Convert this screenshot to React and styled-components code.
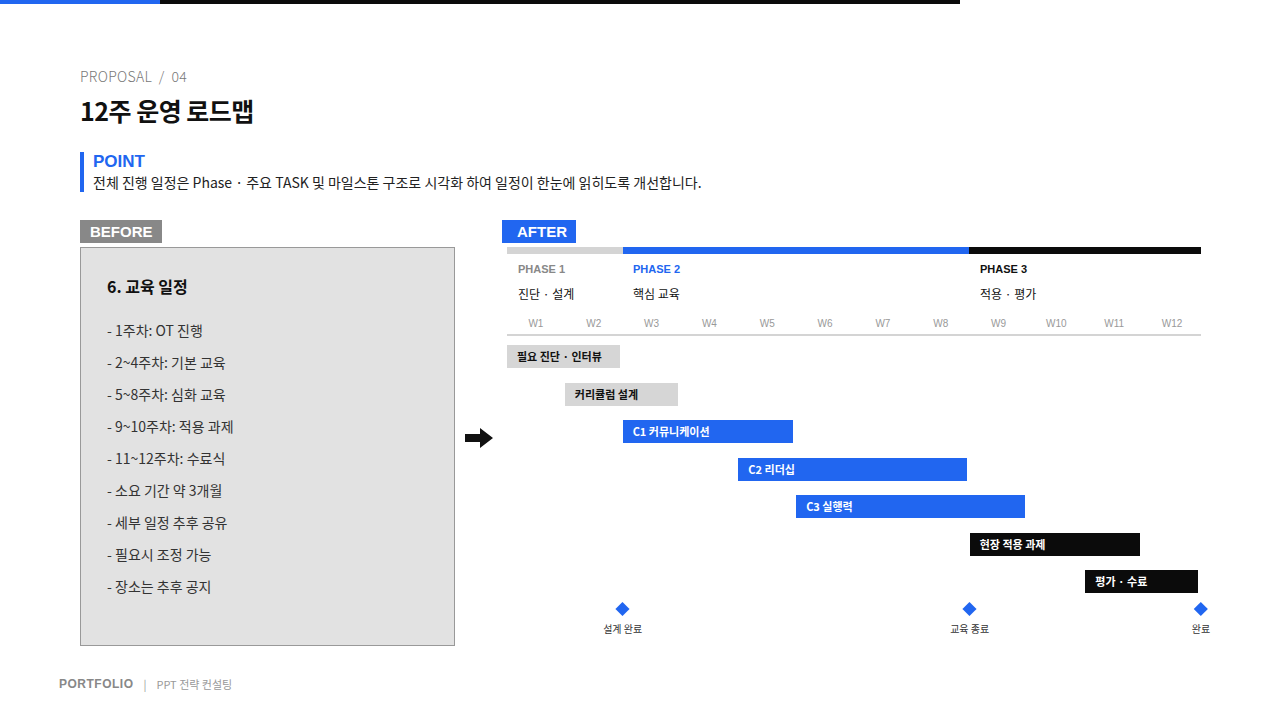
import React from "react";
import styled, { createGlobalStyle } from "styled-components";

const G = createGlobalStyle`
  body{margin:0;background:#fff;font-family:"Noto Sans CJK KR","Noto Sans",sans-serif;color:#111;}
`;
const Page = styled.div`width:1280px;height:720px;position:relative;overflow:hidden;background:#fff;`;
const TopBar = styled.div`display:flex;height:4px;width:960px;`;
const Seg = styled.div`height:100%;width:${p=>p.w}px;background:${p=>p.c};`;
const Content = styled.div`padding:62px 0 0 80px;`;
const Crumb = styled.div`font-size:14px;color:#777;font-weight:300;letter-spacing:0.3px;line-height:20px;`;
const Title = styled.h1`margin:6px 0 0;font-size:25px;font-weight:700;line-height:36px;letter-spacing:-0.5px;`;
const Point = styled.div`margin-top:24px;border-left:4px solid #2166f0;padding-left:9px;`;
const PointT = styled.div`color:#2166f0;font-weight:700;font-size:17px;line-height:20px;font-family:"Liberation Sans","Noto Sans CJK KR",sans-serif;`;
const PointD = styled.div`font-size:14px;line-height:20px;color:#222;`;
const Cols = styled.div`display:flex;margin-top:28px;`;
const Left = styled.div`width:375px;display:flex;flex-direction:column;`;
const Tag = styled.div`align-self:flex-start;background:${p=>p.c};color:#fff;font-weight:700;font-size:15px;line-height:23px;padding:0 9px 0 ${p=>p.pl||10}px;font-family:"Liberation Sans","Noto Sans CJK KR",sans-serif;`;
const Box = styled.div`margin-top:4px;height:399px;box-sizing:border-box;background:#e2e2e2;border:1px solid #999;padding:26px 26px;`;
const BoxT = styled.div`font-size:16px;font-weight:700;margin-bottom:16px;`;
const Item = styled.div`font-size:14px;color:#333;line-height:32px;`;
const Arrow = styled.div`width:47px;display:flex;align-items:center;justify-content:center;padding-top:10px;`;
const Right = styled.div`width:700px;display:flex;flex-direction:column;`;
const PhaseBar = styled.div`display:flex;margin-top:4px;margin-left:5px;height:7px;width:694px;`;
const Phases = styled.div`display:flex;margin-left:5px;width:694px;`;
const Phase = styled.div`width:${p=>p.w}px;padding:8px 0 0 ${p=>p.pl||11}px;box-sizing:border-box;`;
const PhName = styled.div`font-size:11px;font-weight:700;color:${p=>p.c};line-height:14px;font-family:"Liberation Sans",sans-serif;`;
const PhSub = styled.div`font-size:12px;margin-top:10px;line-height:16px;`;
const Weeks = styled.div`display:grid;grid-template-columns:repeat(12,1fr);margin-left:5px;width:694px;margin-top:16px;border-bottom:2px solid #d4d4d4;padding-bottom:5px;`;
const Wk = styled.div`text-align:center;font-size:10px;color:#999;font-family:"Liberation Sans",sans-serif;`;
const Canvas = styled.div`position:relative;margin-left:5px;width:694px;height:310px;`;
const Bar = styled.div`position:absolute;height:23px;background:${p=>p.bg};color:${p=>p.fg};font-size:11px;font-weight:700;line-height:23px;padding-left:10px;box-sizing:border-box;`;
const Mile = styled.div`position:absolute;top:268px;transform:translateX(-50%);display:flex;flex-direction:column;align-items:center;`;
const Diamond = styled.div`width:10px;height:10px;background:#2166f0;transform:rotate(45deg);`;
const MLabel = styled.div`font-size:10px;color:#333;margin-top:7px;white-space:nowrap;`;
const Footer = styled.div`position:absolute;left:59px;top:676px;display:flex;align-items:center;gap:10px;font-size:11px;color:#999;`;
const Logo = styled.span`font-family:"Liberation Sans",sans-serif;font-weight:700;font-size:12px;color:#888;letter-spacing:0.5px;`;

const W = 694/12;
const bars = [
  [0,1.95,"필요 진단 · 인터뷰","#d6d6d6","#111"],
  [1,2.95,"커리큘럼 설계","#d6d6d6","#111"],
  [2,4.95,"C1 커뮤니케이션","#2166f0","#fff"],
  [4,7.95,"C2 리더십","#2166f0","#fff"],
  [5,8.95,"C3 실행력","#2166f0","#fff"],
  [8,10.95,"현장 적용 과제","#0b0b0b","#fff"],
  [10,11.95,"평가 · 수료","#0b0b0b","#fff"],
];
const items=["1주차: OT 진행","2~4주차: 기본 교육","5~8주차: 심화 교육","9~10주차: 적용 과제","11~12주차: 수료식","소요 기간 약 3개월","세부 일정 추후 공유","필요시 조정 가능","장소는 추후 공지"];

export default function App(){
  return <Page><G/>
    <TopBar><Seg w={160} c="#2166f0"/><Seg w={800} c="#0b0b0b"/></TopBar>
    <Content>
      <Crumb>PROPOSAL &nbsp;/ &nbsp;04</Crumb>
      <Title>12주 운영 로드맵</Title>
      <Point><PointT>POINT</PointT><PointD>전체 진행 일정은 Phase · 주요 TASK 및 마일스톤 구조로 시각화 하여 일정이 한눈에 읽히도록 개선합니다.</PointD></Point>
      <Cols>
        <Left><Tag c="#888">BEFORE</Tag>
          <Box><BoxT>6. 교육 일정</BoxT>{items.map(t=><Item key={t}>- {t}</Item>)}</Box>
        </Left>
        <Arrow><svg width="28" height="20" viewBox="0 0 28 20"><path d="M0 6h15V0l13 10-13 10v-6H0z" fill="#111"/></svg></Arrow>
        <Right>
          <Tag c="#2166f0" pl={15}>AFTER</Tag>
          <PhaseBar><Seg w={116} c="#d4d4d4"/><Seg w={346} c="#2166f0"/><Seg w={232} c="#0b0b0b"/></PhaseBar>
          <Phases>
            <Phase w={116}><PhName c="#888">PHASE 1</PhName><PhSub>진단 · 설계</PhSub></Phase>
            <Phase w={346} pl={10}><PhName c="#2166f0">PHASE 2</PhName><PhSub>핵심 교육</PhSub></Phase>
            <Phase w={232}><PhName c="#111">PHASE 3</PhName><PhSub>적용 · 평가</PhSub></Phase>
          </Phases>
          <Weeks>{Array.from({length:12},(_,i)=><Wk key={i}>W{i+1}</Wk>)}</Weeks>
          <Canvas>
            {bars.map(([s,e,t,bg,fg],i)=><Bar key={t} bg={bg} fg={fg} style={{left:s*W,width:(e-s)*W,top:9+i*37.5}}>{t}</Bar>)}
            <Mile style={{left:2*W}}><Diamond/><MLabel>설계 완료</MLabel></Mile>
            <Mile style={{left:8*W}}><Diamond/><MLabel>교육 종료</MLabel></Mile>
            <Mile style={{left:694}}><Diamond/><MLabel>완료</MLabel></Mile>
          </Canvas>
        </Right>
      </Cols>
    </Content>
    <Footer><Logo>PORTFOLIO</Logo><span>|</span><span>PPT 전략 컨설팅</span></Footer>
  </Page>;
}
